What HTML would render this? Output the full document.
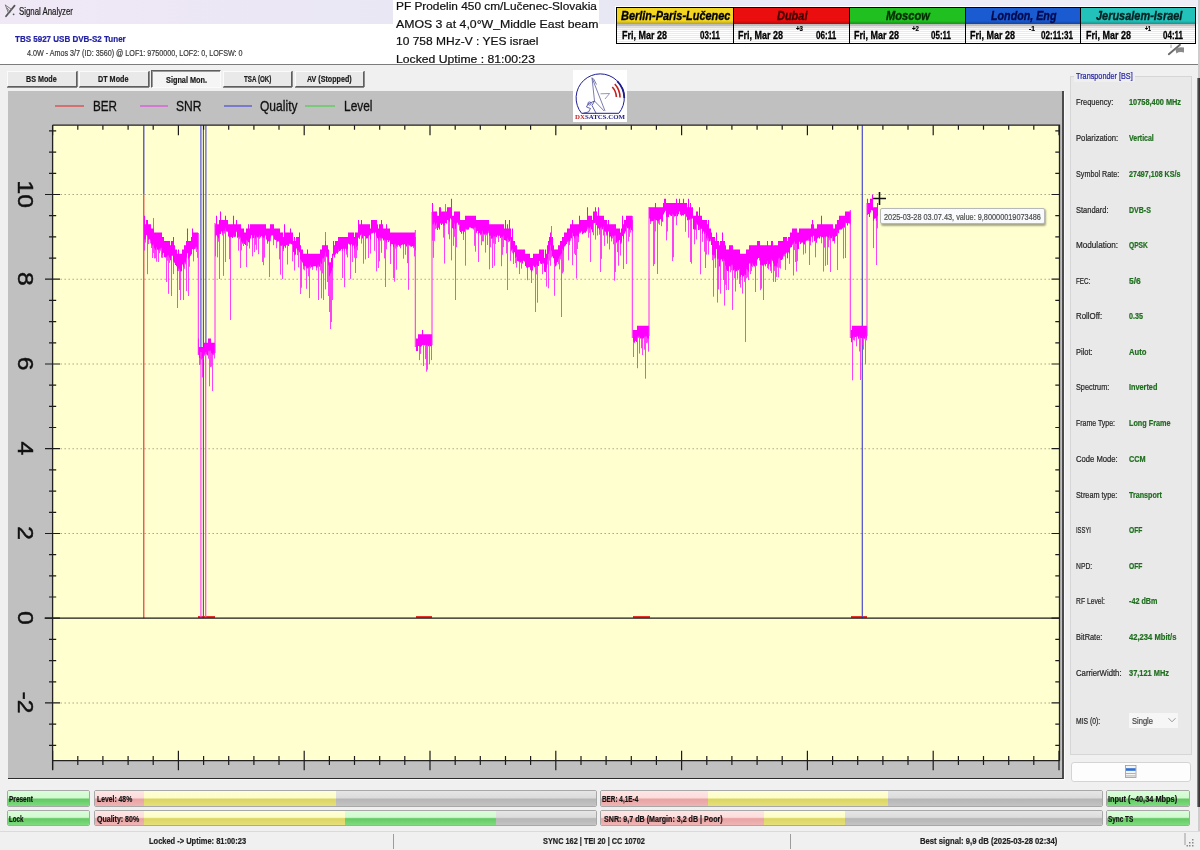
<!DOCTYPE html>
<html lang="en"><head><meta charset="utf-8"><title>Signal Analyzer</title>
<style>
html,body{margin:0;padding:0;}
body{width:1200px;height:850px;overflow:hidden;background:#f0f0f0;position:relative;font-family:"Liberation Sans",sans-serif;}
.a{position:absolute;box-sizing:border-box;}
.t{position:absolute;white-space:nowrap;line-height:1;transform-origin:0 50%;display:block;-webkit-text-stroke:0.22px;}
.tab{position:absolute;box-sizing:border-box;background:#e9e9e9;border:1px solid;border-color:#fbfbfb #5e5e5e #5e5e5e #fbfbfb;box-shadow:0 1px 0 #8a8a8a,1px 0 0 #8a8a8a;}
.tab.on{background:#f5f5f5;border-color:#5e5e5e #fbfbfb #fbfbfb #5e5e5e;box-shadow:inset 1px 1px 0 #9a9a9a;}
.bar{position:absolute;box-sizing:border-box;border:1px solid #a8a8a8;border-radius:2px;overflow:hidden;}
.seg{position:absolute;top:0;bottom:0;}
.gr{background:linear-gradient(#d9ffd9 0,#d2f9d2 45%,#63c963 55%,#7fdc7f 100%);}
.rd{background:linear-gradient(#ffe6e6 0,#fbdcdc 45%,#e9a3a3 55%,#efb4b4 100%);}
.yl{background:linear-gradient(#ffffd6 0,#fdfdc8 45%,#dcd563 55%,#e6e07c 100%);}
.gy{background:linear-gradient(#e6e6e6 0,#dcdcdc 45%,#b6b6b6 55%,#c4c4c4 100%);}
</style></head><body>
<div id="app" style="position:absolute;left:0;top:0;width:1200px;height:850px;will-change:transform;">
<div class="a" id="titlebar" style="left:0;top:0;width:1200px;height:24px;background:linear-gradient(90deg,#f0e8f5 0,#ebe7f5 300px,#e8e8f5 600px,#eeeef8 100%);"></div><div class="a" id="header" style="left:0;top:24px;width:1200px;height:41px;background:#fff;border-bottom:1.7px solid #7c7c7c;"></div><svg class="a" style="left:0;top:0" width="20" height="22" viewBox="0 0 20 22"><g fill="none" stroke-linecap="round"><path d="M6 16.3L14.6 5.6" stroke="#555" stroke-width="1.7"/><path d="M5.4 5.2L11.6 9.4M5.4 5.2L8.6 13.4M7.2 8.2L10.2 12" stroke="#6e6e6e" stroke-width="0.9"/></g><circle cx="13.6" cy="14.3" r="0.9" fill="#555"/></svg><span class="t" style="left:19.00px;top:6.67px;font-size:10.27px;color:#1c1c1c;transform:scaleX(0.7628);">Signal Analyzer</span><span class="t" style="left:14.75px;top:33.82px;font-size:9.95px;color:#2222a2;transform:scaleX(0.8062);font-weight:bold;">TBS 5927 USB DVB-S2 Tuner</span><span class="t" style="left:27.25px;top:48.75px;font-size:9.1px;color:#3c3c3c;transform:scaleX(0.7900);">4.0W - Amos 3/7 (ID: 3560) @ LOF1: 9750000, LOF2: 0, LOFSW: 0</span><div class="a" id="overlay" style="left:393px;top:0;width:206px;height:64px;background:#fff;"></div><span class="t" style="left:395.50px;top:-0.00px;font-size:11.6px;color:#111;transform:scaleX(1.0221);">PF Prodelin 450 cm/Lučenec-Slovakia</span><span class="t" style="left:395.50px;top:18.00px;font-size:11.6px;color:#111;transform:scaleX(1.0604);">AMOS 3 at 4,0°W_Middle East beam</span><span class="t" style="left:395.50px;top:35.00px;font-size:11.6px;color:#111;transform:scaleX(1.0344);">10 758 MHz-V : YES israel</span><span class="t" style="left:395.50px;top:53.00px;font-size:11.6px;color:#111;transform:scaleX(1.0515);">Locked Uptime : 81:00:23</span><div class="a" id="clock" style="left:615px;top:6px;width:581px;height:38px;background:#fff;"></div><div class="a" style="left:616px;top:7px;width:579.5px;height:36.5px;background:#000;"></div><div class="a" style="left:617.25px;top:8px;width:115.25px;height:16px;background:linear-gradient(#f3d621 0,#f3d621 80%,rgba(0,0,0,.25) 100%),#f3d621;"></div><div class="a" style="left:617.25px;top:24px;width:115.25px;height:18.5px;background:linear-gradient(rgba(0,0,0,.3) 0,rgba(0,0,0,.08) 3px,rgba(0,0,0,0) 6px),repeating-linear-gradient(#fff 0,#fff 1px,#ebebeb 1px,#ebebeb 2px);"></div><span class="t" style="left:620.50px;top:9.20px;font-size:13.2px;color:#000;transform:scaleX(0.8292);font-weight:bold;font-style:italic;-webkit-text-stroke:0.35px;">Berlin-Paris-Lučenec</span><span class="t" style="left:622.00px;top:29.65px;font-size:11.3px;color:#000;transform:scaleX(0.7961);font-weight:bold;-webkit-text-stroke:0.3px;">Fri, Mar 28</span><span class="t" style="left:699.50px;top:29.65px;font-size:11.3px;color:#000;transform:scaleX(0.7072);font-weight:bold;-webkit-text-stroke:0.3px;">03:11</span><div class="a" style="left:733.50px;top:8px;width:115.25px;height:16px;background:linear-gradient(#ea0e0e 0,#ea0e0e 80%,rgba(0,0,0,.25) 100%),#ea0e0e;"></div><div class="a" style="left:733.50px;top:24px;width:115.25px;height:18.5px;background:linear-gradient(rgba(0,0,0,.3) 0,rgba(0,0,0,.08) 3px,rgba(0,0,0,0) 6px),repeating-linear-gradient(#fff 0,#fff 1px,#ebebeb 1px,#ebebeb 2px);"></div><span class="t" style="left:777.00px;top:9.20px;font-size:13.2px;color:#440000;transform:scaleX(0.8318);font-weight:bold;font-style:italic;-webkit-text-stroke:0.35px;">Dubai</span><span class="t" style="left:738.00px;top:29.65px;font-size:11.3px;color:#000;transform:scaleX(0.7961);font-weight:bold;-webkit-text-stroke:0.3px;">Fri, Mar 28</span><span class="t" style="left:815.50px;top:29.65px;font-size:11.3px;color:#000;transform:scaleX(0.7161);font-weight:bold;-webkit-text-stroke:0.3px;">06:11</span><span class="t" style="left:796.00px;top:26.32px;font-size:6.96px;color:#000;transform:scaleX(0.8821);font-weight:bold;">+3</span><div class="a" style="left:849.75px;top:8px;width:114.75px;height:16px;background:linear-gradient(#21c021 0,#21c021 80%,rgba(0,0,0,.25) 100%),#21c021;"></div><div class="a" style="left:849.75px;top:24px;width:114.75px;height:18.5px;background:linear-gradient(rgba(0,0,0,.3) 0,rgba(0,0,0,.08) 3px,rgba(0,0,0,0) 6px),repeating-linear-gradient(#fff 0,#fff 1px,#ebebeb 1px,#ebebeb 2px);"></div><span class="t" style="left:886.00px;top:9.20px;font-size:13.2px;color:#002c00;transform:scaleX(0.8450);font-weight:bold;font-style:italic;-webkit-text-stroke:0.35px;">Moscow</span><span class="t" style="left:854.00px;top:29.65px;font-size:11.3px;color:#000;transform:scaleX(0.7961);font-weight:bold;-webkit-text-stroke:0.3px;">Fri, Mar 28</span><span class="t" style="left:931.00px;top:29.65px;font-size:11.3px;color:#000;transform:scaleX(0.7072);font-weight:bold;-webkit-text-stroke:0.3px;">05:11</span><span class="t" style="left:912.00px;top:26.32px;font-size:6.96px;color:#000;transform:scaleX(0.8821);font-weight:bold;">+2</span><div class="a" style="left:965.50px;top:8px;width:114.00px;height:16px;background:linear-gradient(#1a5bd2 0,#1a5bd2 80%,rgba(0,0,0,.25) 100%),#1a5bd2;"></div><div class="a" style="left:965.50px;top:24px;width:114.00px;height:18.5px;background:linear-gradient(rgba(0,0,0,.3) 0,rgba(0,0,0,.08) 3px,rgba(0,0,0,0) 6px),repeating-linear-gradient(#fff 0,#fff 1px,#ebebeb 1px,#ebebeb 2px);"></div><span class="t" style="left:990.50px;top:9.20px;font-size:13.2px;color:#000a4c;transform:scaleX(0.8122);font-weight:bold;font-style:italic;-webkit-text-stroke:0.35px;">London, Eng</span><span class="t" style="left:970.00px;top:29.65px;font-size:11.3px;color:#000;transform:scaleX(0.7961);font-weight:bold;-webkit-text-stroke:0.3px;">Fri, Mar 28</span><span class="t" style="left:1041.00px;top:29.65px;font-size:11.3px;color:#000;transform:scaleX(0.7173);font-weight:bold;-webkit-text-stroke:0.3px;">02:11:31</span><span class="t" style="left:1029.00px;top:26.32px;font-size:6.96px;color:#000;transform:scaleX(0.9695);font-weight:bold;">-1</span><div class="a" style="left:1080.50px;top:8px;width:114.50px;height:16px;background:linear-gradient(#22c2ba 0,#22c2ba 80%,rgba(0,0,0,.25) 100%),#22c2ba;"></div><div class="a" style="left:1080.50px;top:24px;width:114.50px;height:18.5px;background:linear-gradient(rgba(0,0,0,.3) 0,rgba(0,0,0,.08) 3px,rgba(0,0,0,0) 6px),repeating-linear-gradient(#fff 0,#fff 1px,#ebebeb 1px,#ebebeb 2px);"></div><span class="t" style="left:1096.00px;top:9.20px;font-size:13.2px;color:#002222;transform:scaleX(0.8301);font-weight:bold;font-style:italic;-webkit-text-stroke:0.35px;">Jerusalem-Israel</span><span class="t" style="left:1085.50px;top:29.65px;font-size:11.3px;color:#000;transform:scaleX(0.7961);font-weight:bold;-webkit-text-stroke:0.3px;">Fri, Mar 28</span><span class="t" style="left:1163.00px;top:29.65px;font-size:11.3px;color:#000;transform:scaleX(0.7072);font-weight:bold;-webkit-text-stroke:0.3px;">04:11</span><span class="t" style="left:1144.50px;top:26.32px;font-size:6.96px;color:#000;transform:scaleX(0.7561);font-weight:bold;">+1</span><svg class="a" style="left:1166px;top:43px" width="22" height="14" viewBox="1166 43 22 14"><path d="M1168.8 54.2L1180 44.8" stroke="#6a6a6a" stroke-width="1.9" stroke-linecap="round" fill="none"/><path d="M1171 44.5V48" stroke="#888" stroke-width="0.8"/><path d="M1175.4 49.2q3-2.8 8.6-1.6v4.8q-4.6-1.2-7.6 1z" fill="#8a8a8a"/></svg><div class="tab" style="left:7px;top:71px;width:70px;height:16px;"></div><span class="t" style="left:26.10px;top:74.09px;font-size:9.42px;color:#1a1a1a;transform:scaleX(0.7618);font-weight:bold;">BS Mode</span><div class="tab" style="left:79px;top:71px;width:69.5px;height:16px;"></div><span class="t" style="left:98.00px;top:74.09px;font-size:9.42px;color:#1a1a1a;transform:scaleX(0.7669);font-weight:bold;">DT Mode</span><div class="tab on" style="left:150.5px;top:69.5px;width:70.0px;height:18px;"></div><span class="t" style="left:165.60px;top:75.09px;font-size:9.42px;color:#1a1a1a;transform:scaleX(0.7776);font-weight:bold;">Signal Mon.</span><div class="tab" style="left:223px;top:71px;width:69px;height:16px;"></div><span class="t" style="left:243.60px;top:74.09px;font-size:9.42px;color:#1a1a1a;transform:scaleX(0.6600);font-weight:bold;">TSA (OK)</span><div class="tab" style="left:294.5px;top:71px;width:69.5px;height:16px;"></div><span class="t" style="left:307.30px;top:74.09px;font-size:9.42px;color:#1a1a1a;transform:scaleX(0.7582);font-weight:bold;">AV (Stopped)</span><div class="a" id="chartpanel" style="left:8px;top:91px;width:1056px;height:688.3px;background:#c0c0c0;border-right:2px solid #4c4c4c;border-bottom:1.6px solid #2c2c2c;box-shadow:1px 1px 0 #fbfbfb;"></div><svg class="a" id="chart" style="left:0;top:91px" width="1066" height="690" viewBox="0 91 1066 690"><rect x="52.6" y="125.2" width="1006.9" height="635.5" fill="#ffffd0"/><line x1="60.6" x2="1051.5" y1="194.50" y2="194.50" stroke="#88886a" stroke-width="1.1" stroke-dasharray="1.1 2.9"/><line x1="60.6" x2="1051.5" y1="279.24" y2="279.24" stroke="#88886a" stroke-width="1.1" stroke-dasharray="1.1 2.9"/><line x1="60.6" x2="1051.5" y1="363.98" y2="363.98" stroke="#88886a" stroke-width="1.1" stroke-dasharray="1.1 2.9"/><line x1="60.6" x2="1051.5" y1="448.72" y2="448.72" stroke="#88886a" stroke-width="1.1" stroke-dasharray="1.1 2.9"/><line x1="60.6" x2="1051.5" y1="533.46" y2="533.46" stroke="#88886a" stroke-width="1.1" stroke-dasharray="1.1 2.9"/><line x1="60.6" x2="1051.5" y1="702.94" y2="702.94" stroke="#88886a" stroke-width="1.1" stroke-dasharray="1.1 2.9"/><path d="M143.8 194.5 V618.2" stroke="#e02828" stroke-width="1.1" fill="none"/><path d="M198 617.0 H215" stroke="#e00000" stroke-width="1.6" fill="none"/><path d="M416 617.0 H432" stroke="#e00000" stroke-width="1.6" fill="none"/><path d="M633 617.0 H650" stroke="#e00000" stroke-width="1.6" fill="none"/><path d="M851 617.0 H867" stroke="#e00000" stroke-width="1.6" fill="none"/><path d="M143.8 125.2V194.5" stroke="#3a3ac8" stroke-width="1.2" fill="none"/><path d="M200.9 125.2V352M203.4 125.2V618.2M205.9 125.2V352" stroke="#4444d8" stroke-width="1.1" fill="none"/><path d="M862.3 125.2V618.2" stroke="#4a4ad0" stroke-width="1.2" fill="none"/><path d="M144.5 215.7V240.0M145.5 224.2V239.4M146.5 219.9V234.9M147.5 219.9V236.4M148.5 224.2V239.7M149.5 224.2V239.3M150.5 224.2V240.6M151.5 228.4V244.5M152.5 228.4V245.6M153.5 228.4V244.5M154.5 232.6V248.6M155.5 232.6V250.0M156.5 232.6V247.4M157.5 232.6V249.7M158.5 232.6V250.2M159.5 232.6V249.3M160.5 232.6V248.5M161.5 232.6V248.1M162.5 236.9V254.7M163.5 236.9V253.1M164.5 241.1V256.9M165.5 241.1V257.4M166.5 241.1V257.0M167.5 241.1V255.8M168.5 241.1V255.6M169.5 241.1V257.8M170.5 245.3V260.3M171.5 241.1V256.1M172.5 241.1V255.7M173.5 236.9V261.7M174.5 245.3V262.8M175.5 249.6V264.9M176.5 249.6V266.2M177.5 253.8V270.9M178.5 249.6V268.4M179.5 253.8V269.5M180.5 253.8V271.7M181.5 253.8V271.3M182.5 249.6V264.4M183.5 249.6V266.7M184.5 245.3V262.6M185.5 245.3V262.4M186.5 241.1V257.7M187.5 228.4V253.3M188.5 241.1V259.1M189.5 241.1V257.4M190.5 241.1V255.8M191.5 236.9V254.2M192.5 228.4V249.0M193.5 232.6V249.8M194.5 232.6V249.0M195.5 232.6V247.3M196.5 232.6V247.2M197.5 232.6V249.3M198.5 338.6V354.8M199.5 347.0V358.0M200.5 347.0V359.2M201.5 347.0V359.5M202.5 347.0V358.2M203.5 347.0V359.7M204.5 342.8V354.3M205.5 342.8V354.1M206.5 342.8V354.6M207.5 342.8V355.6M208.5 338.6V351.0M209.5 338.6V351.1M210.5 338.6V350.8M211.5 342.8V353.3M212.5 342.8V354.4M213.5 342.8V353.6M214.5 342.8V353.4M215.5 224.2V236.7M216.5 215.7V235.3M217.5 224.2V236.8M218.5 224.2V238.6M219.5 219.9V234.0M220.5 211.4V233.9M221.5 219.9V231.5M222.5 219.9V233.0M223.5 219.9V230.9M224.5 219.9V231.0M225.5 215.7V228.4M226.5 219.9V231.2M227.5 219.9V231.7M228.5 224.2V236.5M229.5 224.2V237.7M230.5 224.2V237.4M231.5 224.2V237.0M232.5 224.2V238.1M233.5 215.7V235.5M234.5 224.2V237.1M235.5 224.2V236.8M236.5 219.9V231.2M237.5 224.2V237.7M238.5 224.2V236.9M239.5 224.2V237.3M240.5 224.2V237.8M241.5 228.4V241.8M242.5 228.4V242.9M243.5 228.4V242.3M244.5 232.6V243.9M245.5 232.6V244.9M246.5 228.4V240.2M247.5 228.4V241.0M248.5 224.2V242.3M249.5 228.4V242.6M250.5 224.2V238.4M251.5 224.2V235.3M252.5 224.2V238.6M253.5 224.2V238.0M254.5 224.2V235.3M255.5 224.2V238.4M256.5 224.2V236.6M257.5 224.2V237.4M258.5 224.2V237.1M259.5 224.2V235.5M260.5 224.2V237.2M261.5 224.2V235.9M262.5 224.2V237.2M263.5 224.2V237.9M264.5 224.2V237.4M265.5 224.2V235.6M266.5 228.4V239.4M267.5 228.4V242.4M268.5 228.4V241.2M269.5 228.4V241.7M270.5 224.2V237.4M271.5 224.2V235.5M272.5 224.2V235.2M273.5 224.2V236.3M274.5 228.4V239.5M275.5 228.4V240.1M276.5 228.4V240.2M277.5 228.4V241.8M278.5 228.4V241.2M279.5 228.4V242.3M280.5 232.6V245.8M281.5 232.6V245.7M282.5 232.6V245.1M283.5 236.9V249.0M284.5 224.2V246.2M285.5 232.6V247.1M286.5 232.6V245.1M287.5 232.6V245.0M288.5 232.6V246.1M289.5 232.6V243.7M290.5 228.4V243.8M291.5 232.6V244.3M292.5 232.6V244.8M293.5 241.1V252.1M294.5 236.9V255.4M295.5 241.1V254.8M296.5 236.9V248.5M297.5 236.9V250.6M298.5 236.9V250.6M299.5 232.6V252.3M300.5 245.3V259.8M301.5 249.6V261.2M302.5 249.6V262.5M303.5 253.8V265.8M304.5 253.8V266.4M305.5 253.8V266.2M306.5 253.8V268.3M307.5 249.6V268.0M308.5 253.8V267.7M309.5 253.8V266.9M310.5 253.8V265.6M311.5 253.8V266.9M312.5 253.8V267.2M313.5 253.8V266.2M314.5 253.8V266.2M315.5 253.8V266.3M316.5 253.8V267.8M317.5 253.8V266.3M318.5 253.8V265.3M319.5 253.8V266.8M320.5 249.6V262.4M321.5 249.6V264.0M322.5 245.3V258.5M323.5 245.3V258.5M324.5 245.3V256.5M325.5 241.1V252.3M326.5 245.3V256.8M327.5 245.3V257.4M328.5 249.6V265.4M329.5 262.3V276.2M330.5 262.3V273.5M331.5 258.1V271.3M332.5 253.8V267.5M333.5 241.1V255.6M334.5 245.3V257.4M335.5 241.1V254.6M336.5 241.1V253.0M337.5 241.1V253.7M338.5 236.9V249.6M339.5 236.9V251.1M340.5 236.9V250.6M341.5 236.9V249.1M342.5 236.9V251.0M343.5 236.9V248.8M344.5 236.9V250.5M345.5 236.9V248.8M346.5 236.9V250.4M347.5 236.9V249.3M348.5 232.6V243.8M349.5 232.6V244.4M350.5 232.6V245.8M351.5 232.6V244.2M352.5 232.6V246.4M353.5 232.6V245.6M354.5 236.9V248.7M355.5 232.6V244.5M356.5 232.6V246.9M357.5 232.6V245.9M358.5 219.9V237.7M359.5 224.2V237.8M360.5 224.2V235.3M361.5 219.9V233.9M362.5 224.2V238.6M363.5 224.2V235.5M364.5 224.2V235.9M365.5 224.2V236.5M366.5 224.2V238.6M367.5 224.2V238.2M368.5 224.2V236.5M369.5 224.2V235.3M370.5 228.4V239.5M371.5 219.9V233.6M372.5 219.9V233.2M373.5 219.9V232.3M374.5 219.9V234.1M375.5 219.9V232.6M376.5 219.9V236.6M377.5 224.2V238.3M378.5 228.4V240.4M379.5 224.2V237.6M380.5 224.2V238.0M381.5 219.9V238.6M382.5 224.2V238.5M383.5 228.4V240.4M384.5 228.4V239.8M385.5 228.4V240.6M386.5 224.2V242.5M387.5 228.4V240.0M388.5 228.4V242.0M389.5 228.4V240.5M390.5 232.6V246.2M391.5 232.6V244.1M392.5 232.6V244.3M393.5 232.6V247.0M394.5 232.6V244.5M395.5 232.6V244.3M396.5 232.6V245.9M397.5 232.6V245.4M398.5 232.6V245.0M399.5 232.6V246.6M400.5 232.6V245.9M401.5 232.6V245.1M402.5 232.6V244.5M403.5 232.6V245.2M404.5 232.6V244.3M405.5 232.6V245.3M406.5 232.6V246.4M407.5 232.6V244.4M408.5 232.6V244.8M409.5 232.6V245.4M410.5 232.6V245.9M411.5 232.6V246.8M412.5 232.6V246.2M413.5 232.6V246.4M414.5 232.6V246.5M415.5 236.9V250.2M416.5 338.6V351.0M417.5 338.6V351.0M418.5 334.3V346.0M419.5 334.3V346.5M420.5 334.3V347.1M421.5 334.3V346.2M422.5 330.1V344.9M423.5 334.3V345.1M424.5 334.3V345.2M425.5 334.3V345.0M426.5 334.3V346.1M427.5 334.3V345.1M428.5 334.3V346.2M429.5 334.3V345.4M430.5 334.3V346.2M431.5 334.3V345.9M432.5 203.0V224.7M433.5 211.4V224.2M434.5 211.4V222.8M435.5 211.4V225.6M436.5 211.4V223.5M437.5 215.7V230.1M438.5 215.7V227.8M439.5 207.2V229.4M440.5 207.2V223.5M441.5 211.4V225.1M442.5 211.4V223.8M443.5 211.4V225.5M444.5 211.4V225.5M445.5 211.4V222.9M446.5 211.4V223.6M447.5 207.2V220.0M448.5 207.2V220.6M449.5 207.2V221.7M450.5 207.2V218.5M451.5 198.7V219.7M452.5 215.7V228.3M453.5 215.7V229.3M454.5 211.4V223.5M455.5 211.4V229.2M456.5 211.4V223.5M457.5 211.4V222.7M458.5 211.4V224.8M459.5 211.4V224.7M460.5 219.9V232.1M461.5 219.9V233.7M462.5 219.9V231.0M463.5 219.9V234.3M464.5 219.9V231.7M465.5 215.7V228.7M466.5 215.7V229.5M467.5 215.7V229.1M468.5 215.7V229.5M469.5 215.7V227.5M470.5 215.7V227.4M471.5 215.7V228.3M472.5 215.7V228.5M473.5 215.7V228.5M474.5 215.7V227.7M475.5 215.7V227.5M476.5 219.9V232.5M477.5 219.9V231.0M478.5 219.9V234.2M479.5 219.9V233.1M480.5 219.9V234.4M481.5 219.9V234.2M482.5 219.9V231.3M483.5 219.9V234.3M484.5 219.9V234.3M485.5 219.9V234.1M486.5 219.9V233.2M487.5 219.9V234.2M488.5 219.9V231.3M489.5 224.2V235.7M490.5 224.2V235.7M491.5 224.2V238.5M492.5 224.2V238.6M493.5 224.2V236.3M494.5 224.2V236.7M495.5 224.2V236.1M496.5 224.2V237.0M497.5 224.2V235.6M498.5 224.2V236.1M499.5 224.2V235.7M500.5 224.2V238.0M501.5 224.2V237.0M502.5 224.2V237.2M503.5 224.2V235.8M504.5 228.4V239.9M505.5 219.9V240.5M506.5 228.4V241.2M507.5 224.2V238.3M508.5 228.4V240.0M509.5 219.9V241.5M510.5 228.4V239.6M511.5 236.9V249.9M512.5 228.4V249.4M513.5 241.1V254.3M514.5 241.1V252.2M515.5 245.3V258.0M516.5 245.3V257.0M517.5 249.6V261.0M518.5 249.6V261.4M519.5 249.6V262.0M520.5 249.6V262.4M521.5 249.6V261.8M522.5 249.6V263.4M523.5 249.6V260.8M524.5 249.6V261.5M525.5 253.8V266.0M526.5 253.8V267.5M527.5 253.8V267.9M528.5 253.8V267.2M529.5 253.8V267.0M530.5 258.1V269.5M531.5 258.1V272.3M532.5 258.1V270.6M533.5 253.8V265.7M534.5 253.8V267.0M535.5 253.8V267.3M536.5 253.8V264.9M537.5 253.8V266.2M538.5 253.8V266.0M539.5 249.6V261.1M540.5 249.6V263.5M541.5 249.6V264.0M542.5 249.6V262.9M543.5 249.6V263.5M544.5 258.1V271.8M545.5 249.6V272.1M546.5 253.8V268.2M547.5 245.3V259.3M548.5 241.1V253.9M549.5 236.9V251.3M550.5 232.6V245.2M551.5 236.9V250.8M552.5 236.9V256.4M553.5 245.3V258.2M554.5 249.6V263.5M555.5 249.6V266.4M556.5 249.6V262.9M557.5 249.6V262.0M558.5 245.3V258.8M559.5 245.3V256.6M560.5 241.1V255.2M561.5 241.1V253.9M562.5 236.9V249.1M563.5 236.9V250.6M564.5 232.6V246.6M565.5 232.6V245.6M566.5 232.6V244.1M567.5 228.4V241.2M568.5 228.4V241.1M569.5 228.4V241.8M570.5 224.2V238.2M571.5 224.2V238.3M572.5 219.9V233.1M573.5 224.2V236.2M574.5 224.2V238.5M575.5 224.2V236.2M576.5 224.2V235.8M577.5 224.2V236.3M578.5 224.2V237.1M579.5 215.7V231.9M580.5 219.9V232.8M581.5 219.9V231.5M582.5 219.9V234.3M583.5 219.9V233.3M584.5 219.9V232.5M585.5 219.9V232.7M586.5 219.9V231.2M587.5 207.2V227.2M588.5 215.7V227.8M589.5 215.7V228.4M590.5 215.7V227.1M591.5 215.7V229.4M592.5 219.9V232.2M593.5 211.4V223.3M594.5 211.4V222.9M595.5 207.2V222.6M596.5 211.4V225.0M597.5 215.7V228.7M598.5 207.2V227.9M599.5 215.7V230.1M600.5 215.7V228.1M601.5 215.7V227.0M602.5 215.7V229.3M603.5 215.7V226.9M604.5 219.9V231.4M605.5 219.9V231.8M606.5 219.9V234.3M607.5 224.2V235.6M608.5 219.9V231.4M609.5 224.2V237.6M610.5 224.2V236.6M611.5 224.2V238.6M612.5 224.2V235.9M613.5 224.2V236.7M614.5 224.2V235.7M615.5 224.2V235.5M616.5 228.4V242.7M617.5 228.4V240.7M618.5 228.4V241.8M619.5 228.4V239.9M620.5 232.6V244.0M621.5 228.4V241.7M622.5 215.7V236.0M623.5 224.2V238.7M624.5 219.9V233.5M625.5 219.9V231.5M626.5 215.7V226.8M627.5 215.7V228.2M628.5 215.7V228.2M629.5 215.7V229.8M630.5 215.7V227.9M631.5 215.7V230.1M632.5 219.9V231.2M633.5 330.1V342.0M634.5 330.1V342.7M635.5 330.1V341.1M636.5 330.1V342.0M637.5 325.8V337.3M638.5 325.8V336.6M639.5 325.8V336.9M640.5 325.8V338.6M641.5 325.8V338.3M642.5 325.8V338.7M643.5 325.8V338.3M644.5 325.8V336.9M645.5 325.8V336.7M646.5 325.8V336.6M647.5 325.8V338.4M648.5 325.8V338.7M649.5 207.2V218.6M650.5 207.2V221.4M651.5 207.2V221.1M652.5 207.2V221.0M653.5 207.2V221.1M654.5 207.2V219.2M655.5 203.0V219.9M656.5 207.2V220.3M657.5 207.2V221.3M658.5 207.2V221.3M659.5 207.2V219.9M660.5 207.2V219.0M661.5 207.2V220.4M662.5 207.2V221.7M663.5 203.0V214.5M664.5 198.7V212.4M665.5 198.7V210.7M666.5 203.0V217.3M667.5 203.0V217.0M668.5 203.0V217.1M669.5 203.0V214.5M670.5 203.0V215.4M671.5 203.0V216.0M672.5 203.0V214.2M673.5 203.0V215.0M674.5 203.0V216.5M675.5 203.0V215.9M676.5 198.7V214.0M677.5 203.0V216.2M678.5 203.0V214.2M679.5 198.7V211.6M680.5 203.0V214.7M681.5 203.0V215.4M682.5 203.0V215.1M683.5 198.7V215.6M684.5 203.0V214.2M685.5 203.0V214.3M686.5 203.0V216.8M687.5 207.2V220.2M688.5 198.7V219.9M689.5 207.2V219.8M690.5 203.0V218.7M691.5 207.2V218.7M692.5 207.2V218.4M693.5 215.7V229.3M694.5 215.7V229.4M695.5 215.7V229.7M696.5 211.4V223.6M697.5 211.4V224.7M698.5 215.7V229.9M699.5 207.2V226.8M700.5 215.7V229.3M701.5 215.7V228.7M702.5 219.9V233.8M703.5 219.9V231.5M704.5 219.9V233.9M705.5 219.9V232.4M706.5 219.9V238.6M707.5 224.2V235.7M708.5 219.9V238.6M709.5 228.4V241.5M710.5 228.4V239.6M711.5 232.6V245.1M712.5 236.9V254.9M713.5 236.9V255.5M714.5 236.9V254.9M715.5 241.1V258.0M716.5 232.6V249.1M717.5 241.1V259.2M718.5 241.1V259.2M719.5 245.3V266.6M720.5 241.1V260.2M721.5 241.1V259.3M722.5 232.6V261.2M723.5 241.1V259.0M724.5 241.1V260.9M725.5 245.3V265.7M726.5 249.6V269.8M727.5 249.6V270.9M728.5 249.6V271.5M729.5 245.3V266.2M730.5 245.3V266.5M731.5 245.3V264.8M732.5 245.3V264.9M733.5 249.6V270.4M734.5 249.6V269.4M735.5 249.6V271.7M736.5 249.6V270.9M737.5 249.6V269.7M738.5 249.6V270.3M739.5 249.6V269.0M740.5 253.8V277.2M741.5 253.8V275.0M742.5 253.8V276.7M743.5 253.8V276.2M744.5 253.8V274.5M745.5 253.8V275.0M746.5 249.6V268.9M747.5 249.6V269.9M748.5 249.6V271.8M749.5 245.3V263.5M750.5 245.3V263.5M751.5 245.3V266.2M752.5 245.3V263.4M753.5 245.3V265.3M754.5 245.3V266.4M755.5 245.3V264.1M756.5 245.3V265.8M757.5 241.1V259.4M758.5 241.1V257.9M759.5 241.1V258.0M760.5 245.3V264.9M761.5 245.3V264.9M762.5 245.3V265.4M763.5 245.3V266.1M764.5 245.3V264.4M765.5 245.3V265.2M766.5 245.3V264.1M767.5 241.1V261.1M768.5 245.3V265.8M769.5 245.3V264.1M770.5 245.3V266.8M771.5 241.1V259.5M772.5 241.1V260.7M773.5 245.3V263.6M774.5 245.3V266.5M775.5 245.3V266.0M776.5 245.3V266.5M777.5 245.3V263.4M778.5 241.1V258.7M779.5 241.1V258.1M780.5 241.1V259.9M781.5 241.1V260.1M782.5 241.1V259.1M783.5 236.9V255.3M784.5 236.9V254.2M785.5 236.9V254.1M786.5 236.9V252.8M787.5 241.1V258.2M788.5 236.9V252.6M789.5 236.9V253.8M790.5 232.6V247.6M791.5 232.6V247.0M792.5 228.4V244.0M793.5 228.4V243.4M794.5 228.4V241.4M795.5 228.4V244.1M796.5 228.4V243.8M797.5 232.6V249.5M798.5 232.6V249.1M799.5 228.4V241.8M800.5 228.4V243.9M801.5 228.4V242.8M802.5 228.4V242.4M803.5 228.4V243.9M804.5 228.4V244.4M805.5 228.4V241.5M806.5 228.4V240.8M807.5 228.4V240.6M808.5 228.4V239.4M809.5 228.4V240.9M810.5 228.4V241.6M811.5 224.2V236.7M812.5 219.9V237.5M813.5 224.2V235.7M814.5 228.4V241.1M815.5 228.4V240.1M816.5 228.4V242.7M817.5 224.2V238.6M818.5 224.2V237.5M819.5 224.2V238.5M820.5 224.2V236.5M821.5 215.7V237.6M822.5 224.2V237.0M823.5 224.2V238.5M824.5 224.2V236.9M825.5 224.2V237.4M826.5 224.2V236.6M827.5 224.2V236.9M828.5 224.2V238.1M829.5 224.2V235.7M830.5 224.2V237.9M831.5 224.2V238.3M832.5 224.2V236.6M833.5 228.4V241.0M834.5 228.4V241.6M835.5 224.2V236.8M836.5 224.2V236.1M837.5 219.9V231.9M838.5 219.9V233.0M839.5 215.7V229.7M840.5 215.7V229.6M841.5 215.7V229.4M842.5 215.7V228.4M843.5 215.7V227.2M844.5 215.7V227.4M845.5 211.4V222.5M846.5 211.4V223.0M847.5 211.4V225.6M848.5 211.4V222.9M849.5 211.4V223.4M850.5 211.4V223.4M851.5 330.1V342.3M852.5 325.8V338.3M853.5 325.8V336.4M854.5 325.8V337.2M855.5 325.8V336.9M856.5 325.8V336.4M857.5 325.8V336.5M858.5 325.8V338.7M859.5 325.8V336.5M860.5 325.8V338.0M861.5 325.8V337.9M862.5 325.8V336.8M863.5 325.8V338.1M864.5 325.8V338.7M865.5 325.8V336.5M866.5 325.8V337.9M867.5 198.7V215.0M868.5 203.0V214.1M869.5 203.0V217.0M870.5 198.7V212.5M871.5 198.7V210.1M872.5 194.5V210.6M873.5 207.2V220.9M874.5 207.2V218.7M875.5 207.2V218.3M876.5 207.2V220.9M877.5 203.0V216.2" stroke="#ff00ff" stroke-width="1.05" fill="none"/><path d="M144.5 239.0V250.5M145.5 238.4V242.7M147.5 235.4V274.2M148.5 238.7V244.1M150.5 239.6V243.3M151.5 243.5V248.0M152.5 244.6V258.0M153.5 243.5V253.1M154.5 247.6V258.4M155.5 249.0V258.2M156.5 246.4V261.7M158.5 249.2V262.0M159.5 248.3V253.3M160.5 247.5V250.7M161.5 247.1V257.7M162.5 253.7V257.9M163.5 252.1V253.1M166.5 256.0V282.0M167.5 254.8V260.8M168.5 254.6V293.8M169.5 256.8V262.9M171.5 255.1V296.0M173.5 260.7V274.1M177.5 269.9V308.0M178.5 267.4V271.0M179.5 268.5V290.0M180.5 270.7V300.0M183.5 265.7V300.0M184.5 261.6V268.8M185.5 261.4V264.3M186.5 256.7V291.0M188.5 258.1V296.0M189.5 256.4V266.8M193.5 248.8V261.4M195.5 246.3V248.6M196.5 246.2V252.0M197.5 248.3V257.8M199.5 357.0V365.0M200.5 358.2V364.3M202.5 357.2V377.4M204.5 353.3V355.7M208.5 350.0V358.7M209.5 350.1V386.3M210.5 349.8V367.1M211.5 352.3V366.5M212.5 353.4V391.0M213.5 352.6V355.2M214.5 352.4V358.5M215.5 235.7V256.3M217.5 235.8V257.3M218.5 237.6V241.7M219.5 233.0V279.0M222.5 232.0V235.5M223.5 229.9V275.9M224.5 230.0V233.5M225.5 227.4V262.0M226.5 230.2V231.5M229.5 236.7V259.3M230.5 236.4V320.0M233.5 234.5V236.8M236.5 230.2V232.1M238.5 235.9V250.7M239.5 236.3V239.2M240.5 236.8V268.0M241.5 240.8V250.5M242.5 241.9V243.9M243.5 241.3V246.0M246.5 239.2V267.0M247.5 240.0V246.0M249.5 241.6V248.5M252.5 237.6V256.4M254.5 234.3V252.1M255.5 237.4V244.8M256.5 235.6V249.8M258.5 236.1V254.2M259.5 234.5V238.8M262.5 236.2V262.0M263.5 236.9V265.2M264.5 236.4V257.6M267.5 241.4V243.8M269.5 240.7V277.1M270.5 236.4V240.9M273.5 235.3V245.2M276.5 239.2V248.3M279.5 241.3V259.4M280.5 244.8V274.7M281.5 244.7V246.0M282.5 244.1V279.0M283.5 248.0V251.1M285.5 246.1V248.1M287.5 244.0V264.5M292.5 243.8V261.3M294.5 254.4V270.5M297.5 249.6V255.2M298.5 249.6V267.4M300.5 258.8V294.0M301.5 260.2V287.8M303.5 264.8V269.4M304.5 265.4V270.3M306.5 267.3V288.8M307.5 267.0V268.6M308.5 266.7V276.3M309.5 265.9V298.1M310.5 264.6V268.3M311.5 265.9V267.1M312.5 266.2V269.9M316.5 266.8V270.5M317.5 265.3V267.5M318.5 264.3V300.0M320.5 261.4V270.5M321.5 263.0V298.4M322.5 257.5V273.4M323.5 257.5V300.0M324.5 255.5V261.8M325.5 251.3V289.4M327.5 256.4V282.0M328.5 264.4V296.0M329.5 275.2V312.0M330.5 272.5V329.0M331.5 270.3V322.0M332.5 266.5V300.0M338.5 248.6V252.1M342.5 250.0V278.0M344.5 249.5V287.1M346.5 249.4V254.6M347.5 248.3V257.4M350.5 244.8V278.9M352.5 245.4V262.0M354.5 247.7V257.8M355.5 243.5V273.0M356.5 245.9V258.2M357.5 244.9V250.3M359.5 236.8V239.1M361.5 232.9V243.6M363.5 234.5V263.7M365.5 235.5V259.4M368.5 235.5V258.0M370.5 238.5V253.5M373.5 231.3V232.7M374.5 233.1V250.8M376.5 235.6V271.4M378.5 239.4V268.0M379.5 236.6V261.4M380.5 237.0V240.7M381.5 237.6V252.8M384.5 238.8V258.4M385.5 239.6V287.0M386.5 241.5V249.2M390.5 245.2V264.0M393.5 246.0V278.0M394.5 243.5V281.7M395.5 243.3V248.6M396.5 244.9V269.8M397.5 244.4V247.2M400.5 244.9V248.3M403.5 244.2V258.7M405.5 244.3V254.8M407.5 243.4V263.2M408.5 243.8V289.8M410.5 244.9V246.6M413.5 245.4V248.1M414.5 245.5V256.4M419.5 345.5V360.1M420.5 346.1V353.9M423.5 344.1V366.0M425.5 344.0V359.2M426.5 345.1V371.7M427.5 344.1V369.7M429.5 344.4V364.0M431.5 344.9V360.1M432.5 223.7V240.7M433.5 223.2V257.8M434.5 221.8V240.9M435.5 224.6V229.1M436.5 222.5V228.3M443.5 224.5V237.6M444.5 224.5V263.6M448.5 219.6V234.3M449.5 220.7V239.3M451.5 218.7V260.4M453.5 228.3V245.8M454.5 222.5V236.8M455.5 228.2V300.0M456.5 222.5V247.2M459.5 223.7V230.6M463.5 233.3V240.0M465.5 227.7V265.7M467.5 228.1V230.1M473.5 227.5V229.6M474.5 226.7V245.8M475.5 226.5V251.7M476.5 231.5V232.9M478.5 233.2V262.0M480.5 233.4V234.8M481.5 233.2V245.2M482.5 230.3V241.3M483.5 233.3V241.4M484.5 233.3V234.8M485.5 233.1V252.6M486.5 232.2V235.1M487.5 233.2V245.0M488.5 230.3V232.9M489.5 234.7V269.3M490.5 234.7V247.3M491.5 237.5V238.8M492.5 237.6V268.0M493.5 235.3V243.5M494.5 235.7V265.8M495.5 235.1V244.0M498.5 235.1V242.0M500.5 237.0V238.0M501.5 236.0V266.2M502.5 236.2V254.8M503.5 234.8V247.1M506.5 240.2V253.4M507.5 237.3V290.0M508.5 239.0V242.2M510.5 238.6V260.9M511.5 248.9V251.3M512.5 248.4V252.8M513.5 253.3V264.0M515.5 257.0V263.2M516.5 256.0V267.6M519.5 261.0V274.1M521.5 260.8V268.6M527.5 266.9V280.2M530.5 268.5V270.2M531.5 271.3V283.0M535.5 266.3V312.0M536.5 263.9V274.4M537.5 265.2V302.7M542.5 261.9V274.2M546.5 267.2V286.6M547.5 258.3V264.5M548.5 252.9V288.3M549.5 250.3V260.6M550.5 244.2V265.8M551.5 249.8V257.5M554.5 262.5V295.8M556.5 261.9V265.4M558.5 257.8V264.2M559.5 255.6V269.4M560.5 254.2V259.3M561.5 252.9V317.0M562.5 248.1V273.4M563.5 249.6V271.8M567.5 240.2V242.2M568.5 240.1V260.4M569.5 240.8V245.1M570.5 237.2V240.7M572.5 232.1V265.1M574.5 237.5V253.7M575.5 235.2V255.1M576.5 234.8V278.5M577.5 235.3V249.0M578.5 236.1V242.2M579.5 230.9V233.6M587.5 226.2V229.5M588.5 226.8V237.7M589.5 227.4V232.9M590.5 226.1V262.0M593.5 222.3V235.2M595.5 221.6V239.6M597.5 227.7V235.5M598.5 226.9V228.4M599.5 229.1V234.7M600.5 227.1V272.0M601.5 226.0V258.9M603.5 225.9V235.5M604.5 230.4V245.9M606.5 233.3V235.5M607.5 234.6V243.6M609.5 236.6V249.5M611.5 237.6V241.4M612.5 234.9V238.5M613.5 235.7V244.3M614.5 234.7V280.7M615.5 234.5V272.0M617.5 239.7V252.1M618.5 240.8V265.7M620.5 243.0V255.5M621.5 240.7V243.4M623.5 237.7V269.0M626.5 225.8V264.0M628.5 227.2V241.3M629.5 228.8V236.9M630.5 226.9V232.6M633.5 341.0V357.0M637.5 336.3V368.2M638.5 335.6V338.0M639.5 335.9V353.6M641.5 337.3V348.3M642.5 337.7V355.0M644.5 335.9V349.6M645.5 335.7V378.7M646.5 335.6V343.0M647.5 337.4V342.5M648.5 337.7V351.7M650.5 220.4V224.0M651.5 220.1V221.4M653.5 220.1V266.1M654.5 218.2V264.2M655.5 218.9V231.5M657.5 220.3V274.0M658.5 220.3V223.6M659.5 218.9V224.8M661.5 219.4V226.2M666.5 216.3V240.4M667.5 216.0V231.6M672.5 213.2V261.0M673.5 214.0V257.3M676.5 213.0V225.1M681.5 214.4V216.1M685.5 213.3V231.8M688.5 218.9V237.7M690.5 217.7V262.0M691.5 217.7V263.7M694.5 228.4V244.3M696.5 222.6V239.4M699.5 225.8V230.0M700.5 228.3V274.3M702.5 232.8V241.8M704.5 232.9V251.7M705.5 231.4V268.0M706.5 237.6V254.6M707.5 234.7V240.7M708.5 237.6V254.6M710.5 238.6V241.0M712.5 253.9V260.2M713.5 254.5V296.7M714.5 253.9V258.6M715.5 257.0V267.8M717.5 258.2V302.6M718.5 258.2V289.4M720.5 259.2V293.7M723.5 258.0V280.0M724.5 259.9V305.6M725.5 264.7V284.8M726.5 268.8V290.0M728.5 270.5V290.0M730.5 265.5V272.2M731.5 263.8V270.2M732.5 263.9V309.9M734.5 268.4V278.2M735.5 270.7V291.5M737.5 268.7V278.7M739.5 268.0V284.0M740.5 276.2V287.6M742.5 275.7V293.6M744.5 273.5V281.9M745.5 274.0V342.0M746.5 267.9V278.3M747.5 268.9V277.3M748.5 270.8V280.1M750.5 262.5V274.1M751.5 265.2V271.1M752.5 262.4V267.0M753.5 264.3V265.9M755.5 263.1V292.0M759.5 257.0V260.6M760.5 263.9V290.2M761.5 263.9V288.7M763.5 265.1V300.0M765.5 264.2V266.3M767.5 260.1V268.2M768.5 264.8V269.4M770.5 265.8V270.9M771.5 258.5V273.1M773.5 262.6V281.9M774.5 265.5V270.9M775.5 265.0V282.0M776.5 265.5V276.9M777.5 262.4V267.6M778.5 257.7V277.3M779.5 257.1V267.7M780.5 258.9V268.6M782.5 258.1V259.2M783.5 254.3V256.6M784.5 253.2V256.4M785.5 253.1V270.0M789.5 252.8V263.9M792.5 243.0V245.1M793.5 242.4V275.5M794.5 240.4V250.0M795.5 243.1V262.0M796.5 242.8V271.6M797.5 248.5V261.2M803.5 242.9V254.6M805.5 240.5V253.3M808.5 238.4V240.8M809.5 239.9V265.0M810.5 240.6V245.4M812.5 236.5V242.4M815.5 239.1V257.3M821.5 236.6V243.3M823.5 237.5V271.6M824.5 235.9V247.6M825.5 236.4V265.8M827.5 235.9V264.9M828.5 237.1V247.2M829.5 234.7V240.2M830.5 236.9V272.0M832.5 235.6V241.2M834.5 240.6V243.6M837.5 230.9V270.0M843.5 226.2V258.6M845.5 221.5V258.0M850.5 222.4V224.6M852.5 337.3V380.3M853.5 335.4V340.0M854.5 336.2V340.6M856.5 335.4V346.3M859.5 335.5V351.5M860.5 337.0V380.0M862.5 335.8V344.9M863.5 337.1V349.6M865.5 335.5V364.4M866.5 336.9V340.4M873.5 219.9V248.1M876.5 219.9V265.0M877.5 215.2V228.4M153.5 218V230M551.5 226V238M445.5 204V216M325.5 232V244" stroke="#ff10ff" stroke-width="0.8" fill="none"/><path d="M198.3 233V355M415.3 230V347M632.3 216V338M850.3 210V338M215 223V353M432 212V345M649 207V336M867 203V336" stroke="#ff22ff" stroke-width="1" fill="none"/><path d="M200.9 352V618.2M205.7 352V618.2" stroke="#ff44ee" stroke-width="1.2" fill="none"/><line x1="44.6" x2="1059.5" y1="618.2" y2="618.2" stroke="#1a1a1a" stroke-width="1.3"/><path d="M52.6 125.2V769.7M52.6 125.2H1059.5V760.7M52.6 760.7H1059.5" stroke="#222" stroke-width="1.3" fill="none"/><path d="M52.6 125.2v10M52.6 750.7v19.5M77.8 125.2v4.6M77.8 756.1v9M102.9 125.2v4.6M102.9 756.1v9M128.1 125.2v4.6M128.1 756.1v9M153.2 125.2v4.6M153.2 756.1v9M178.4 125.2v10M178.4 750.7v19.5M203.6 125.2v4.6M203.6 756.1v9M228.7 125.2v4.6M228.7 756.1v9M253.9 125.2v4.6M253.9 756.1v9M279.0 125.2v4.6M279.0 756.1v9M304.2 125.2v10M304.2 750.7v19.5M329.4 125.2v4.6M329.4 756.1v9M354.5 125.2v4.6M354.5 756.1v9M379.7 125.2v4.6M379.7 756.1v9M404.8 125.2v4.6M404.8 756.1v9M430.0 125.2v10M430.0 750.7v19.5M455.2 125.2v4.6M455.2 756.1v9M480.3 125.2v4.6M480.3 756.1v9M505.5 125.2v4.6M505.5 756.1v9M530.6 125.2v4.6M530.6 756.1v9M555.8 125.2v10M555.8 750.7v19.5M581.0 125.2v4.6M581.0 756.1v9M606.1 125.2v4.6M606.1 756.1v9M631.3 125.2v4.6M631.3 756.1v9M656.4 125.2v4.6M656.4 756.1v9M681.6 125.2v10M681.6 750.7v19.5M706.8 125.2v4.6M706.8 756.1v9M731.9 125.2v4.6M731.9 756.1v9M757.1 125.2v4.6M757.1 756.1v9M782.2 125.2v4.6M782.2 756.1v9M807.4 125.2v10M807.4 750.7v19.5M832.6 125.2v4.6M832.6 756.1v9M857.7 125.2v4.6M857.7 756.1v9M882.9 125.2v4.6M882.9 756.1v9M908.0 125.2v4.6M908.0 756.1v9M933.2 125.2v10M933.2 750.7v19.5M958.4 125.2v4.6M958.4 756.1v9M983.5 125.2v4.6M983.5 756.1v9M1008.7 125.2v4.6M1008.7 756.1v9M1033.8 125.2v4.6M1033.8 756.1v9M1059.0 125.2v10M1059.0 750.7v19.5M49.0 745.3h7.2M1055.3 745.3h4.2M49.0 724.1h7.2M1055.3 724.1h4.2M45.0 702.9h15M1051.5 702.9h8M49.0 681.8h7.2M1055.3 681.8h4.2M49.0 660.6h7.2M1055.3 660.6h4.2M49.0 639.4h7.2M1055.3 639.4h4.2M45.0 618.2h15M1051.5 618.2h8M49.0 597.0h7.2M1055.3 597.0h4.2M49.0 575.8h7.2M1055.3 575.8h4.2M49.0 554.6h7.2M1055.3 554.6h4.2M45.0 533.5h15M1051.5 533.5h8M49.0 512.3h7.2M1055.3 512.3h4.2M49.0 491.1h7.2M1055.3 491.1h4.2M49.0 469.9h7.2M1055.3 469.9h4.2M45.0 448.7h15M1051.5 448.7h8M49.0 427.5h7.2M1055.3 427.5h4.2M49.0 406.4h7.2M1055.3 406.4h4.2M49.0 385.2h7.2M1055.3 385.2h4.2M45.0 364.0h15M1051.5 364.0h8M49.0 342.8h7.2M1055.3 342.8h4.2M49.0 321.6h7.2M1055.3 321.6h4.2M49.0 300.4h7.2M1055.3 300.4h4.2M45.0 279.2h15M1051.5 279.2h8M49.0 258.1h7.2M1055.3 258.1h4.2M49.0 236.9h7.2M1055.3 236.9h4.2M49.0 215.7h7.2M1055.3 215.7h4.2M45.0 194.5h15M1051.5 194.5h8M49.0 173.3h7.2M1055.3 173.3h4.2M49.0 152.1h7.2M1055.3 152.1h4.2M49.0 130.9h7.2M1055.3 130.9h4.2" stroke="#1c1c1c" stroke-width="1.2" fill="none"/><text transform="translate(17.7 194.2) rotate(90) scale(1.14 1)" text-anchor="middle" font-family="Liberation Sans, sans-serif" font-size="21.6" fill="#111" stroke="#111" stroke-width="0.45">10</text><text transform="translate(17.7 278.9) rotate(90) scale(1.14 1)" text-anchor="middle" font-family="Liberation Sans, sans-serif" font-size="21.6" fill="#111" stroke="#111" stroke-width="0.45">8</text><text transform="translate(17.7 363.7) rotate(90) scale(1.14 1)" text-anchor="middle" font-family="Liberation Sans, sans-serif" font-size="21.6" fill="#111" stroke="#111" stroke-width="0.45">6</text><text transform="translate(17.7 448.4) rotate(90) scale(1.14 1)" text-anchor="middle" font-family="Liberation Sans, sans-serif" font-size="21.6" fill="#111" stroke="#111" stroke-width="0.45">4</text><text transform="translate(17.7 533.2) rotate(90) scale(1.14 1)" text-anchor="middle" font-family="Liberation Sans, sans-serif" font-size="21.6" fill="#111" stroke="#111" stroke-width="0.45">2</text><text transform="translate(17.7 617.9) rotate(90) scale(1.14 1)" text-anchor="middle" font-family="Liberation Sans, sans-serif" font-size="21.6" fill="#111" stroke="#111" stroke-width="0.45">0</text><text transform="translate(17.7 702.6) rotate(90) scale(1.14 1)" text-anchor="middle" font-family="Liberation Sans, sans-serif" font-size="21.6" fill="#111" stroke="#111" stroke-width="0.45">-2</text><line x1="55" x2="84" y1="106" y2="106" stroke="#e03030" stroke-width="1.1"/><text x="93" y="111.2" font-family="Liberation Sans, sans-serif" font-size="14.3" fill="#111" stroke="#111" stroke-width="0.3" textLength="24" lengthAdjust="spacingAndGlyphs">BER</text><line x1="140" x2="168" y1="106" y2="106" stroke="#e040e0" stroke-width="1.1"/><text x="176" y="111.2" font-family="Liberation Sans, sans-serif" font-size="14.3" fill="#111" stroke="#111" stroke-width="0.3" textLength="25.5" lengthAdjust="spacingAndGlyphs">SNR</text><line x1="224" x2="252" y1="106" y2="106" stroke="#4040d8" stroke-width="1.1"/><text x="260" y="111.2" font-family="Liberation Sans, sans-serif" font-size="14.3" fill="#111" stroke="#111" stroke-width="0.3" textLength="37.5" lengthAdjust="spacingAndGlyphs">Quality</text><line x1="305" x2="335" y1="106" y2="106" stroke="#40d040" stroke-width="1.1"/><text x="344" y="111.2" font-family="Liberation Sans, sans-serif" font-size="14.3" fill="#111" stroke="#111" stroke-width="0.3" textLength="28.5" lengthAdjust="spacingAndGlyphs">Level</text></svg><div class="a" id="logo" style="left:573px;top:69.5px;width:54px;height:52.5px;background:#fff;"></div><svg class="a" style="left:573px;top:69.5px" width="54" height="52.5" viewBox="573 69.5 54 52.5">
<path d="M581.6 112.8 A24.1 24.1 0 1 1 618.8 112.8 Z" fill="none" stroke="#1c1c92" stroke-width="1"/>
<path d="M617.2 80.6 A24.1 24.1 0 0 1 624.3 97.5" fill="none" stroke="#1c1c8c" stroke-width="1.8"/>
<path d="M614.8 83.5 A20 20 0 0 1 620 97" fill="none" stroke="#c42020" stroke-width="1.6"/>
<path d="M612.3 86.5 A16 16 0 0 1 616.4 96.5" fill="none" stroke="#c42020" stroke-width="1.6"/>
<path d="M592 77.2 L605 110.4 M592 77.2 L594.5 100.5 L604 110.4 M593.4 78 L596.5 84" fill="none" stroke="#5a5a9a" stroke-width="0.8"/>
<path d="M600.5 93.3 L609.6 93 L605 98.5" fill="none" stroke="#6a6aa6" stroke-width="0.7"/>
<path d="M594.5 100.5 L588 103.5 L586.5 106.5 L590.5 108 L588.5 111.5 L583.5 112.6 M594.5 100.5 L592 105 L596 112.6" fill="none" stroke="#3a3a96" stroke-width="0.8"/>
<circle cx="589.5" cy="103" r="1.6" fill="none" stroke="#3a3a96" stroke-width="0.7"/>
</svg><span class="t" style="left:575.40px;top:114.43px;font-size:6.74px;color:#1c1c80;transform:scaleX(1.0200);font-weight:bold;font-family:'Liberation Serif',serif;-webkit-text-stroke:0;"><span style="color:#c02626">DX</span>SATCS.COM</span><div class="a" id="tooltip" style="left:880.3px;top:208.4px;width:165px;height:15.8px;background:#f8fafb;border:1px solid #b8b8b8;border-radius:2px;box-shadow:1px 1.5px 2px rgba(0,0,0,.35);"></div><span class="t" style="left:884.30px;top:211.99px;font-size:9.63px;color:#4e4e4e;transform:scaleX(0.7615);">2025-03-28 03.07.43, value: 9,80000019073486</span><svg class="a" style="left:872px;top:191px" width="15" height="15" viewBox="0 0 15 15"><path d="M7.5 1V14M1 7.5H14" stroke="#111" stroke-width="1.6" fill="none"/></svg><div class="a" id="groupbox" style="left:1070px;top:76px;width:121.5px;height:678.5px;background:#e9e9e9;border:1px solid #d6d6d6;"></div><div class="a" style="left:1074px;top:70px;width:61px;height:12px;background:#efefef;"></div><span class="t" style="left:1076.00px;top:71.70px;font-size:9.2px;color:#2424a4;transform:scaleX(0.7915);">Transponder [BS]</span><span class="t" style="left:1076.20px;top:97.70px;font-size:9.2px;color:#262626;transform:scaleX(0.8105);">Frequency:</span><span class="t" style="left:1128.70px;top:97.70px;font-size:9.2px;color:#1f6e1f;transform:scaleX(0.8021);font-weight:bold;">10758,400 MHz</span><span class="t" style="left:1076.20px;top:133.70px;font-size:9.2px;color:#262626;transform:scaleX(0.8355);">Polarization:</span><span class="t" style="left:1128.70px;top:133.70px;font-size:9.2px;color:#1f6e1f;transform:scaleX(0.7576);font-weight:bold;">Vertical</span><span class="t" style="left:1076.20px;top:169.70px;font-size:9.2px;color:#262626;transform:scaleX(0.7841);">Symbol Rate:</span><span class="t" style="left:1128.70px;top:169.70px;font-size:9.2px;color:#1f6e1f;transform:scaleX(0.7744);font-weight:bold;">27497,108 KS/s</span><span class="t" style="left:1076.20px;top:205.70px;font-size:9.2px;color:#262626;transform:scaleX(0.8171);">Standard:</span><span class="t" style="left:1128.70px;top:205.70px;font-size:9.2px;color:#1f6e1f;transform:scaleX(0.7650);font-weight:bold;">DVB-S</span><span class="t" style="left:1076.20px;top:240.70px;font-size:9.2px;color:#262626;transform:scaleX(0.8851);">Modulation:</span><span class="t" style="left:1128.70px;top:240.70px;font-size:9.2px;color:#1f6e1f;transform:scaleX(0.7249);font-weight:bold;">QPSK</span><span class="t" style="left:1076.20px;top:276.70px;font-size:9.2px;color:#262626;transform:scaleX(0.6871);">FEC:</span><span class="t" style="left:1128.70px;top:276.70px;font-size:9.2px;color:#1f6e1f;transform:scaleX(0.9226);font-weight:bold;">5/6</span><span class="t" style="left:1076.20px;top:311.70px;font-size:9.2px;color:#262626;transform:scaleX(0.8588);">RollOff:</span><span class="t" style="left:1128.70px;top:311.70px;font-size:9.2px;color:#1f6e1f;transform:scaleX(0.7763);font-weight:bold;">0.35</span><span class="t" style="left:1076.20px;top:347.70px;font-size:9.2px;color:#262626;transform:scaleX(0.8165);">Pilot:</span><span class="t" style="left:1128.70px;top:347.70px;font-size:9.2px;color:#1f6e1f;transform:scaleX(0.8354);font-weight:bold;">Auto</span><span class="t" style="left:1076.20px;top:382.70px;font-size:9.2px;color:#262626;transform:scaleX(0.7942);">Spectrum:</span><span class="t" style="left:1128.70px;top:382.70px;font-size:9.2px;color:#1f6e1f;transform:scaleX(0.7935);font-weight:bold;">Inverted</span><span class="t" style="left:1076.20px;top:418.70px;font-size:9.2px;color:#262626;transform:scaleX(0.7596);">Frame Type:</span><span class="t" style="left:1128.70px;top:418.70px;font-size:9.2px;color:#1f6e1f;transform:scaleX(0.7901);font-weight:bold;">Long Frame</span><span class="t" style="left:1076.20px;top:454.70px;font-size:9.2px;color:#262626;transform:scaleX(0.8340);">Code Mode:</span><span class="t" style="left:1128.70px;top:454.70px;font-size:9.2px;color:#1f6e1f;transform:scaleX(0.7923);font-weight:bold;">CCM</span><span class="t" style="left:1076.20px;top:490.70px;font-size:9.2px;color:#262626;transform:scaleX(0.7938);">Stream type:</span><span class="t" style="left:1128.70px;top:490.70px;font-size:9.2px;color:#1f6e1f;transform:scaleX(0.7778);font-weight:bold;">Transport</span><span class="t" style="left:1076.20px;top:525.70px;font-size:9.2px;color:#262626;transform:scaleX(0.6335);">ISSYI</span><span class="t" style="left:1128.70px;top:525.70px;font-size:9.2px;color:#1f6e1f;transform:scaleX(0.7284);font-weight:bold;">OFF</span><span class="t" style="left:1076.20px;top:561.70px;font-size:9.2px;color:#262626;transform:scaleX(0.7370);">NPD:</span><span class="t" style="left:1128.70px;top:561.70px;font-size:9.2px;color:#1f6e1f;transform:scaleX(0.7284);font-weight:bold;">OFF</span><span class="t" style="left:1076.20px;top:596.70px;font-size:9.2px;color:#262626;transform:scaleX(0.7366);">RF Level:</span><span class="t" style="left:1128.70px;top:596.70px;font-size:9.2px;color:#1f6e1f;transform:scaleX(0.7824);font-weight:bold;">-42 dBm</span><span class="t" style="left:1076.20px;top:632.70px;font-size:9.2px;color:#262626;transform:scaleX(0.8067);">BitRate:</span><span class="t" style="left:1128.70px;top:632.70px;font-size:9.2px;color:#1f6e1f;transform:scaleX(0.8294);font-weight:bold;">42,234 Mbit/s</span><span class="t" style="left:1076.20px;top:668.70px;font-size:9.2px;color:#262626;transform:scaleX(0.8415);">CarrierWidth:</span><span class="t" style="left:1128.70px;top:668.70px;font-size:9.2px;color:#1f6e1f;transform:scaleX(0.8084);font-weight:bold;">37,121 MHz</span><span class="t" style="left:1076.20px;top:716.70px;font-size:9.2px;color:#262626;transform:scaleX(0.7367);">MIS (0):</span><div class="a" id="combo" style="left:1129.3px;top:713px;width:48.7px;height:15px;background:#f6f6f6;"></div><span class="t" style="left:1131.70px;top:716.09px;font-size:9.42px;color:#444;transform:scaleX(0.8019);">Single</span><svg class="a" style="left:1167px;top:716px" width="10" height="8" viewBox="0 0 10 8"><path d="M1.5 2.2L5 5.8L8.5 2.2" stroke="#8a8a8a" stroke-width="0.9" fill="none"/></svg><div class="a" id="btn" style="left:1071px;top:761.5px;width:119.5px;height:20px;background:#fdfdfd;border:1px solid #d4d4d4;border-radius:3px;"></div><svg class="a" style="left:1125px;top:765px" width="12" height="13" viewBox="0 0 12 13"><rect x="0.5" y="0.5" width="10.5" height="12" fill="#f4f4f4" stroke="#9a9a9a" stroke-width="0.8"/><rect x="1" y="3.2" width="9.6" height="2.6" fill="#2f6fd0"/><rect x="1" y="8" width="9.6" height="1" fill="#b0b0b0"/><rect x="1" y="10.4" width="9.6" height="1" fill="#b0b0b0"/></svg><div class="a" style="left:1197.5px;top:0;width:2.5px;height:831px;background:#cdcdcd;"></div><div class="a" style="left:1196.6px;top:78px;width:3.4px;height:729px;background:linear-gradient(90deg,#a8a8a8,#4a4a4a 45%,#2e2e2e);"></div><div class="bar" style="left:7.3px;top:790.3000000000001px;width:83.2px;height:16.4px;"><div class="seg gr" style="left:-1.0px;width:83.7px;"></div></div><span class="t" style="left:9.30px;top:793.98px;font-size:9.63px;color:#141414;transform:scaleX(0.6765);font-weight:bold;">Present</span><div class="bar" style="left:7.3px;top:810.3000000000001px;width:83.2px;height:16.0px;"><div class="seg gr" style="left:-1.0px;width:83.7px;"></div></div><span class="t" style="left:9.30px;top:813.98px;font-size:9.63px;color:#141414;transform:scaleX(0.6407);font-weight:bold;">Lock</span><div class="bar" style="left:93.6px;top:790.3000000000001px;width:503.9px;height:16.4px;"><div class="seg rd" style="left:-1.0px;width:50.2px;"></div><div class="seg yl" style="left:49.2px;width:192.0px;"></div><div class="seg gy" style="left:241.2px;width:262.2px;"></div></div><span class="t" style="left:97.30px;top:793.98px;font-size:9.63px;color:#141414;transform:scaleX(0.7071);font-weight:bold;">Level: 48%</span><div class="bar" style="left:93.6px;top:810.3000000000001px;width:503.9px;height:16.0px;"><div class="seg rd" style="left:-1.0px;width:50.2px;"></div><div class="seg yl" style="left:49.2px;width:201.7px;"></div><div class="seg gr" style="left:250.9px;width:150.5px;"></div><div class="seg gy" style="left:401.4px;width:102.0px;"></div></div><span class="t" style="left:97.30px;top:813.98px;font-size:9.63px;color:#141414;transform:scaleX(0.7301);font-weight:bold;">Quality: 80%</span><div class="bar" style="left:599.5px;top:790.3000000000001px;width:503.7px;height:16.4px;"><div class="seg rd" style="left:-1.0px;width:108.1px;"></div><div class="seg yl" style="left:107.1px;width:180.0px;"></div><div class="seg gy" style="left:287.1px;width:216.4px;"></div></div><span class="t" style="left:602.30px;top:793.98px;font-size:9.63px;color:#141414;transform:scaleX(0.6631);font-weight:bold;">BER: 4,1E-4</span><div class="bar" style="left:599.5px;top:810.3000000000001px;width:503.7px;height:16.0px;"><div class="seg rd" style="left:-1.0px;width:164.5px;"></div><div class="seg yl" style="left:163.5px;width:81.0px;"></div><div class="seg gy" style="left:244.5px;width:259.0px;"></div></div><span class="t" style="left:603.80px;top:813.98px;font-size:9.63px;color:#141414;transform:scaleX(0.7394);font-weight:bold;">SNR: 9,7 dB (Margin: 3,2 dB | Poor)</span><div class="bar" style="left:1106px;top:790.3000000000001px;width:84.0px;height:16.6px;"><div class="seg gr" style="left:-1.0px;width:85.0px;"></div></div><span class="t" style="left:1108.30px;top:793.98px;font-size:9.63px;color:#141414;transform:scaleX(0.7675);font-weight:bold;">Input (~40,34 Mbps)</span><div class="bar" style="left:1106px;top:810.3000000000001px;width:84.0px;height:16.1px;"><div class="seg gr" style="left:-1.0px;width:85.0px;"></div></div><span class="t" style="left:1108.30px;top:813.98px;font-size:9.63px;color:#141414;transform:scaleX(0.6632);font-weight:bold;">Sync TS</span><div class="a" id="status" style="left:0;top:831px;width:1200px;height:19px;background:#f0f0f0;border-top:1px solid #dadada;"></div><div class="a" style="left:392.5px;top:833.5px;width:1px;height:15px;background:#9c9c9c;"></div><div class="a" style="left:790px;top:833.5px;width:1px;height:15px;background:#9c9c9c;"></div><span class="t" style="left:148.80px;top:835.88px;font-size:9.84px;color:#222;transform:scaleX(0.7612);font-weight:bold;">Locked -&gt; Uptime: 81:00:23</span><span class="t" style="left:542.60px;top:835.88px;font-size:9.84px;color:#222;transform:scaleX(0.7487);font-weight:bold;">SYNC 162 | TEI 20 | CC 10702</span><span class="t" style="left:920.00px;top:835.88px;font-size:9.84px;color:#222;transform:scaleX(0.7832);font-weight:bold;">Best signal: 9,9 dB (2025-03-28 02:34)</span><svg class="a" style="left:1184px;top:833px" width="12" height="14" viewBox="0 0 12 14"><path d="M1 0V12" stroke="#9c9c9c" stroke-width="1"/><g fill="#8a8a8a"><rect x="8" y="6" width="1.5" height="1.5"/><rect x="8" y="9" width="1.5" height="1.5"/><rect x="5" y="9" width="1.5" height="1.5"/><rect x="8" y="12" width="1.5" height="1.5"/><rect x="5" y="12" width="1.5" height="1.5"/><rect x="2.5" y="12" width="1.5" height="1.5"/></g></svg>
</div>
</body></html>
